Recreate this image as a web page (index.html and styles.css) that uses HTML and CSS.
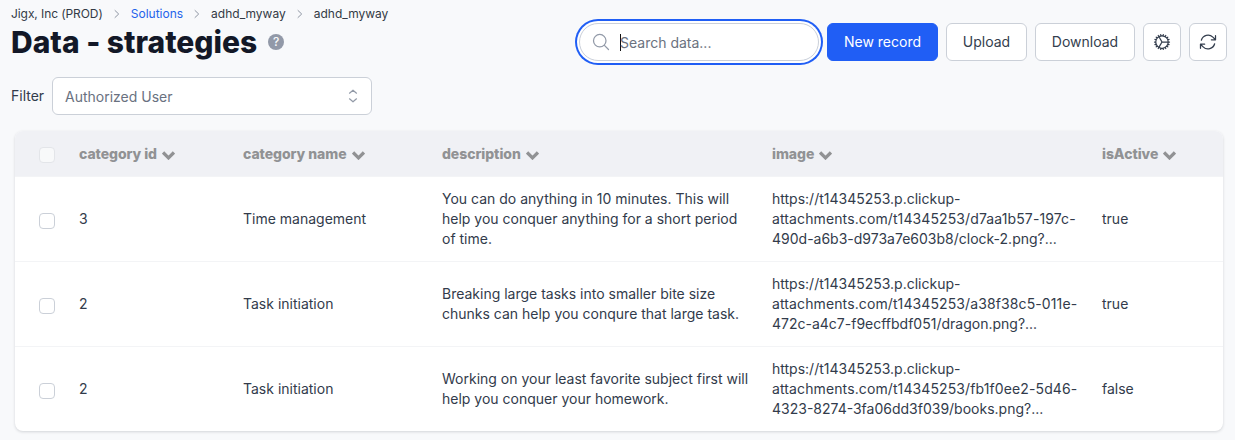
FILE: index.html
```html
<!DOCTYPE html>
<html lang="en">
<head>
<meta charset="utf-8">
<title>Data - strategies</title>
<link rel="stylesheet" href="styles.css">
</head>
<body>
<svg class="sprite" aria-hidden="true">
  <symbol id="chev" viewBox="0 0 12 8"><path d="M1 1.2 6 6.2l5-5" fill="none" stroke="currentColor" stroke-width="3"/></symbol>
  <symbol id="sep" viewBox="0 0 6 10"><path d="m1 1.5 3.7 3.5-3.7 3.5" fill="none" stroke="currentColor" stroke-linecap="round" stroke-linejoin="round"/></symbol>
</svg>
<header class="top">
  <div class="heading">
    <nav class="crumbs">
      <span class="org">Jigx, Inc (PROD)</span><svg class="sep"><use href="#sep"/></svg>
      <a class="link">Solutions</a><svg class="sep"><use href="#sep"/></svg>
      <span>adhd_myway</span><svg class="sep"><use href="#sep"/></svg>
      <span>adhd_myway</span>
    </nav>
    <div class="title-row">
      <h1 class="title">Data - strategies</h1>
      <span class="help">?</span>
    </div>
  </div>
  <div class="actions">
    <div class="search">
      <svg class="icon" viewBox="0 0 24 24"><path d="m21 21-5.197-5.197m0 0A7.5 7.5 0 1 0 5.196 5.196a7.5 7.5 0 0 0 10.607 10.607Z"/></svg>
      <span class="caret"></span><span class="placeholder">Search data...</span>
    </div>
    <button class="btn primary">New record</button>
    <button class="btn upload">Upload</button>
    <button class="btn download">Download</button>
    <button class="btn square" aria-label="Settings"><svg class="icon" viewBox="0 0 24 24"><path d="M4.5 12a7.5 7.5 0 0 0 15 0m-15 0a7.5 7.5 0 1 1 15 0m-15 0H3m16.5 0H21m-1.5 0H12m-8.457 3.077 1.41-.513m14.095-5.13 1.41-.513M5.106 17.785l1.15-.964m11.49-9.642 1.149-.964M7.501 19.795l.75-1.3m7.5-12.99.75-1.3m-6.063 16.658.26-1.477m2.605-14.772.26-1.477m0 17.726-.26-1.477M10.698 4.614l-.26-1.477M16.5 19.794l-.75-1.299M7.5 4.205 12 12m6.894 5.785-1.149-.964M6.256 7.178l-1.15-.964m15.352 8.864-1.41-.513M4.954 9.435l-1.41-.514M12.002 12l-3.75 6.495"/></svg></button>
    <button class="btn square" aria-label="Refresh"><svg class="icon" viewBox="0 0 24 24"><path d="M16.023 9.348h4.992v-.001M2.985 19.644v-4.992m0 0h4.992m-4.993 0 3.181 3.183a8.25 8.25 0 0 0 13.803-3.7M4.031 9.865a8.25 8.25 0 0 1 13.803-3.7l3.181 3.182m0-4.991v4.99"/></svg></button>
  </div>
</header>
<div class="filter">
  <span class="filter-label">Filter</span>
  <div class="select"><span>Authorized User</span>
    <svg class="updown" viewBox="0 0 10 14"><path d="m1.5 4.2 3.5-3 3.5 3M1.5 9.8l3.5 3 3.5-3"/></svg>
  </div>
</div>
<main class="card">
  <div class="row head">
    <span class="box muted"></span>
    <div>category id<svg class="chev"><use href="#chev"/></svg></div>
    <div>category name<svg class="chev"><use href="#chev"/></svg></div>
    <div>description<svg class="chev"><use href="#chev"/></svg></div>
    <div>image<svg class="chev"><use href="#chev"/></svg></div>
    <div>isActive<svg class="chev"><use href="#chev"/></svg></div>
  </div>
  <div class="row">
    <span class="box"></span>
    <div>3</div>
    <div>Time management</div>
    <div>You can do anything in 10 minutes. This will<br>help you conquer anything for a short period<br>of time.</div>
    <div>https://t14345253.p.clickup-<br><span class="path">attachments.com/t14345253/d7aa1b57-197c-</span><br>490d-a6b3-d973a7e603b8/clock-2.png?...</div>
    <div>true</div>
  </div>
  <div class="row">
    <span class="box"></span>
    <div>2</div>
    <div>Task initiation</div>
    <div>Breaking large tasks into smaller bite size<br>chunks can help you conqure that large task.</div>
    <div>https://t14345253.p.clickup-<br><span class="path">attachments.com/t14345253/a38f38c5-011e-</span><br>472c-a4c7-f9ecffbdf051/dragon.png?...</div>
    <div>true</div>
  </div>
  <div class="row">
    <span class="box"></span>
    <div>2</div>
    <div>Task initiation</div>
    <div>Working on your least favorite subject first will<br>help you conquer your homework.</div>
    <div>https://t14345253.p.clickup-<br><span class="path">attachments.com/t14345253/fb1f0ee2-5d46-</span><br>4323-8274-3fa06dd3f039/books.png?...</div>
    <div>false</div>
  </div>
</main>
</body>
</html>
```
FILE: styles.css
```css
* { box-sizing: border-box; }
body {
  margin: 0;
  height: 440px;
  overflow: hidden;
  background: #f8f9fb;
  color: #323b4b;
  font: 14px/20px Inter, "Liberation Sans", sans-serif;
}
.sprite { display: none; }
.top {
  display: flex;
  justify-content: space-between;
  height: 77px;
  padding: 0 8px 0 11px;
}
.crumbs {
  display: flex;
  align-items: center;
  height: 20px;
  padding-top: 8px;
  color: #333a45;
  font-size: 12px;
  white-space: nowrap;
}
.crumbs .org { letter-spacing: -.08px; }
.crumbs .link { color: #2463eb; }
.sep { width: 6px; height: 10px; margin: 0 11px; color: #8f96a3; flex: none; }
.title-row { display: flex; align-items: center; gap: 11px; height: 36px; margin-top: 4px; }
.title {
  margin: 0;
  color: #131827;
  font-size: 30px;
  line-height: 36px;
  font-weight: 800;
  letter-spacing: 0;
  white-space: nowrap;
}
.help {
  width: 16px;
  height: 16px;
  border-radius: 50%;
  background: #9299a8;
  color: #f8f9fb;
  font-size: 12px;
  line-height: 16px;
  font-weight: 500;
  text-align: center;
}
.icon {
  width: 20px;
  height: 20px;
  fill: none;
  stroke: currentColor;
  stroke-width: 1.5;
  stroke-linecap: round;
  stroke-linejoin: round;
  flex: none;
}
.actions { display: flex; gap: 8px; padding-top: 23px; }
.search {
  display: flex;
  align-items: center;
  width: 240px;
  height: 38px;
  padding-left: 11px;
  border: 1px solid #cbd0d9;
  border-radius: 19px;
  background: #fff;
  box-shadow: 0 0 0 2px #fff, 0 0 0 4px #205ef5;
  color: #929aa8;
}
.caret { width: 1px; height: 17px; margin-left: 9px; margin-right: -1px; background: #111; }
.placeholder { color: #6b7280; padding-top: 2px; }
.btn {
  display: flex;
  align-items: center;
  justify-content: center;
  height: 38px;
  padding: 0;
  border: 1px solid #cbd0d8;
  border-radius: 6px;
  background: #fff;
  color: #343e4e;
  font: inherit;
  letter-spacing: inherit;
}
.primary { width: 111px; border-color: #205ef5; background: #205ef5; color: #fff; }
.upload { width: 81px; }
.download { width: 100px; }
.square { width: 38px; }
.search + .primary { margin-left: 0; }
.filter { display: flex; align-items: center; gap: 8px; height: 38px; padding-left: 11px; }
.filter-label { width: 33px; white-space: nowrap; }
.select {
  display: flex;
  align-items: center;
  justify-content: space-between;
  width: 320px;
  height: 38px;
  padding: 2px 13px 0 12px;
  border: 1px solid #cbd0d8;
  border-radius: 6px;
  background: #fff;
  color: #697180;
}
.updown { width: 10px; height: 14px; margin-top: -3px; fill: none; stroke: #929aa7; stroke-width: 1.2; stroke-linecap: round; stroke-linejoin: round; }
.card {
  width: 1208px;
  margin: 16px 0 0 15px;
  border-radius: 8px;
  overflow: hidden;
  background: #fff;
  box-shadow: 0 1px 3px rgba(16, 24, 40, .16);
}
.row {
  display: grid;
  grid-template-columns: 40px 164px 199px 330px 330px 1fr;
  align-items: center;
  height: 85px;
  padding-left: 24px;
  border-top: 1px solid #f3f4f6;
  white-space: nowrap;
}
.head { height: 45px; border: 0; background: #f0f1f5; color: #919294; font-weight: 800; letter-spacing: -.06px; }
.path { letter-spacing: .11px; }
.box {
  width: 16px;
  height: 16px;
  margin-top: 3px;
  border: 1px solid #cbd0d8;
  border-radius: 4px;
  background: #fff;
}
.muted { border-color: #e3e5e9; background: #f8f9fa; }
.chev { width: 13px; height: 9px; margin-left: 5px; vertical-align: -1px; }
```
